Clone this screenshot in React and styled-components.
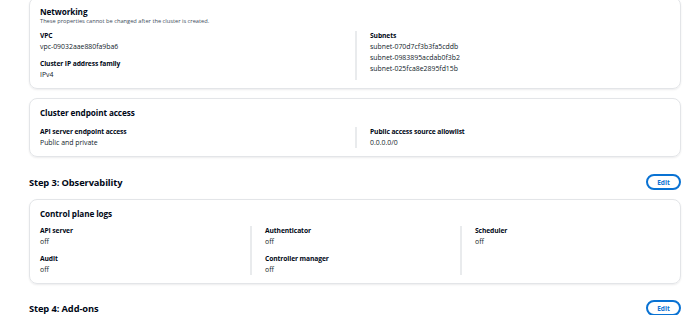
import React from "react"
import styled, { createGlobalStyle } from "styled-components"

const Global = createGlobalStyle`
  html, body { margin: 0; padding: 0; background: #fff; }
  body {
    font-family: "Open Sans", "Noto Sans", sans-serif;
    color: #000716;
    overflow: hidden;
  }
`

const Page = styled.div`
  width: 690px;
  height: 315px;
  box-sizing: border-box;
  padding: 0 9px 0 29px;
  display: flex;
  flex-direction: column;
  overflow: hidden;
  & > *{ flex-shrink: 0; }
  .first{ margin-top: -3px; }
`

const Card = styled.div`
  border: 1px solid #e3e5e8;
  border-radius: 8px;
  box-shadow: 0 1px 2px rgba(0, 7, 22, 0.08);
  padding: 9px 10px 8px;
  margin-bottom: ${p => p.$mb || 0}px;
  display: flex;
  flex-direction: column;
  gap: ${p => p.$gap || 9}px;
`

const Head = styled.div`
  display: flex;
  flex-direction: column;
  h3{
    margin: 0;
    font-size: 8.2px;
    line-height: 10px;
    font-weight: 700;
    letter-spacing: -0.1px;
  }
  p{
    margin: 0;
    font-size: 5.7px;
    line-height: 8px;
    color: #414d5c;
  }
`

const Columns = styled.div`
  display: grid;
  grid-template-columns: repeat(${p => p.$cols}, 1fr);
`

const Column = styled.div`
  display: flex;
  flex-direction: column;
  gap: 7px;
  &:not(:first-child){
    border-left: 2px solid #e9ebed;
    padding-left: 13px;
  }
`

const Field = styled.div`
  display: flex;
  flex-direction: column;
  font-size: 6.7px;
  line-height: 10px;
  .label{ font-weight: 700; letter-spacing: -0.1px; }
  .value{ color: #0f1b2a; font-size: 6.9px; line-height: 11px; }
`

const StepRow = styled.div`
  display: flex;
  align-items: center;
  justify-content: space-between;
  height: 20px;
  margin: ${p => p.$mt}px 0 7px;
  h2{
    margin: 0;
    font-size: 9.3px;
    font-weight: 700;
    letter-spacing: -0.1px;
  }
`

const EditButton = styled.button`
  width: 35px;
  height: 16px;
  box-sizing: border-box;
  border: 2px solid #0972d3;
  border-radius: 20px;
  background: #fff;
  color: #0972d3;
  font-family: "Open Sans", sans-serif;
  font-weight: 700;
  font-size: 6.5px;
  padding: 0;
  cursor: pointer;
`

const Item = ({ label, values }) => (
  <Field>
    <span className="label">{label}</span>
    {values.map(v => <span className="value" key={v}>{v}</span>)}
  </Field>
)

export default function App() {
  return (
    <Page>
      <Global />
      <Card className="first" $mb={9} $gap={6}>
        <Head>
          <h3>Networking</h3>
          <p>These properties cannot be changed after the cluster is created.</p>
        </Head>
        <Columns $cols={2}>
          <Column>
            <Item label="VPC" values={["vpc-09032aae880fa9ba6"]} />
            <Item label="Cluster IP address family" values={["IPv4"]} />
          </Column>
          <Column>
            <Item label="Subnets" values={["subnet-070d7cf3b3fa5cddb", "subnet-0983895acdab0f3b2", "subnet-025fca8e2895fd15b"]} />
          </Column>
        </Columns>
      </Card>

      <Card>
        <Head><h3>Cluster endpoint access</h3></Head>
        <Columns $cols={2}>
          <Column>
            <Item label="API server endpoint access" values={["Public and private"]} />
          </Column>
          <Column>
            <Item label="Public access source allowlist" values={["0.0.0.0/0"]} />
          </Column>
        </Columns>
      </Card>

      <StepRow $mt={15}>
        <h2>Step 3: Observability</h2>
        <EditButton>Edit</EditButton>
      </StepRow>

      <Card $gap={7}>
        <Head><h3>Control plane logs</h3></Head>
        <Columns $cols={3}>
          <Column>
            <Item label="API server" values={["off"]} />
            <Item label="Audit" values={["off"]} />
          </Column>
          <Column>
            <Item label="Authenticator" values={["off"]} />
            <Item label="Controller manager" values={["off"]} />
          </Column>
          <Column>
            <Item label="Scheduler" values={["off"]} />
          </Column>
        </Columns>
      </Card>

      <StepRow $mt={14}>
        <h2>Step 4: Add-ons</h2>
        <EditButton>Edit</EditButton>
      </StepRow>
    </Page>
  )
}
